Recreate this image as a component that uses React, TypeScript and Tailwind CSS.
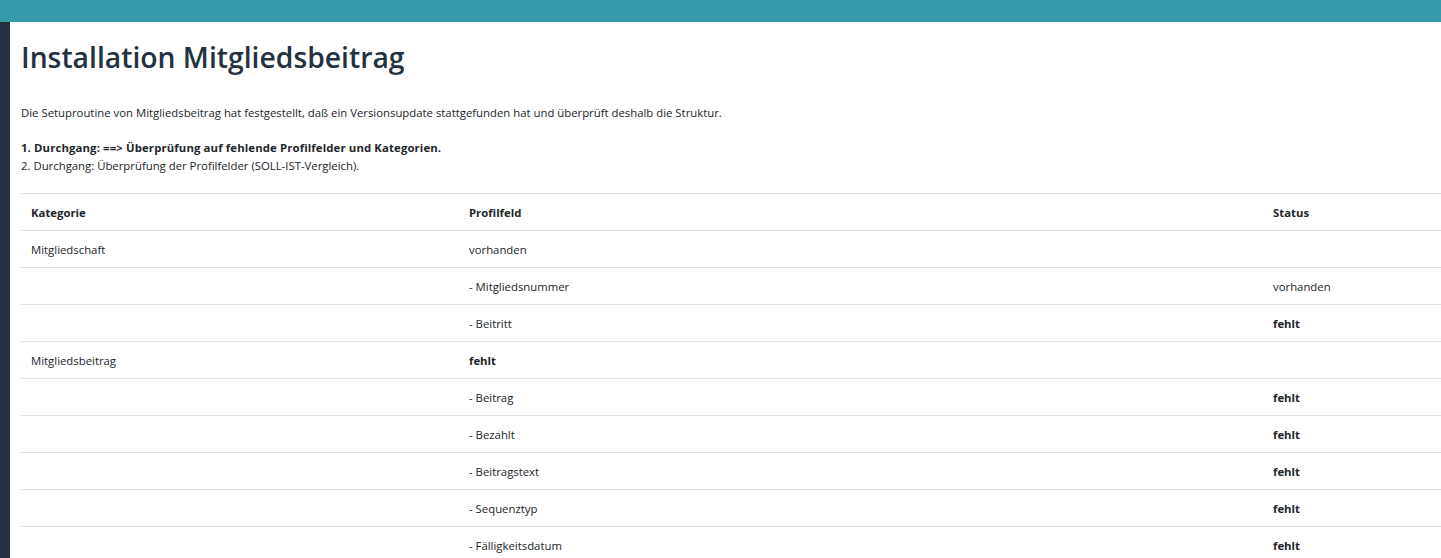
import React from "react";

const rows: { k: string; p: string; pBold?: boolean; s: string; sBold?: boolean }[] = [
  { k: "Mitgliedschaft", p: "vorhanden", s: "" },
  { k: "", p: "- Mitgliedsnummer", s: "vorhanden" },
  { k: "", p: "- Beitritt", s: "fehlt", sBold: true },
  { k: "Mitgliedsbeitrag", p: "fehlt", pBold: true, s: "" },
  { k: "", p: "- Beitrag", s: "fehlt", sBold: true },
  { k: "", p: "- Bezahlt", s: "fehlt", sBold: true },
  { k: "", p: "- Beitragstext", s: "fehlt", sBold: true },
  { k: "", p: "- Sequenztyp", s: "fehlt", sBold: true },
  { k: "", p: "- Fälligkeitsdatum", s: "fehlt", sBold: true },
];

export default function App() {
  return (
    <div
      className="w-[1441px] h-[558px] overflow-hidden bg-white flex flex-col text-[#212529]"
      style={{ fontFamily: "'Open Sans', 'Noto Sans', sans-serif" }}
    >
      <div className="h-[22px] bg-[#359aa9] shrink-0" />
      <div className="flex flex-1">
        <div className="w-[10px] bg-[#243240] shrink-0" />
        <div className="flex-1 pl-[11px]">
          <h1 className="text-[28.3px] leading-[36px] font-semibold text-[#243240] mt-[17px] mb-[0px]">
            Installation Mitgliedsbeitrag
          </h1>
          <p className="text-[11.35px] leading-[18px] mt-[29px]">
            Die Setuproutine von Mitgliedsbeitrag hat festgestellt, daß ein Versionsupdate stattgefunden hat und überprüft deshalb die Struktur.
          </p>
          <p className="text-[11.35px] leading-[18px] mt-[17px]">
            <span className="font-bold tracking-[0.13px]">1. Durchgang: ==&gt; Überprüfung auf fehlende Profilfelder und Kategorien.</span>
            <br />
            2. Durchgang: Überprüfung der Profilfelder (SOLL-IST-Vergleich).
          </p>
          <table className="w-[1420px] mt-[18px] text-[11.35px] border-collapse table-fixed">
            <colgroup>
              <col className="w-[438px]" />
              <col className="w-[804px]" />
              <col />
            </colgroup>
            <thead>
              <tr className="border-t border-[#dee2e6] border-b border-b-[#dee2e6] h-[37px]">
                <th className="text-left font-bold px-[10px] pt-[1px]">Kategorie</th>
                <th className="text-left font-bold px-[10px] pt-[1px]">Profilfeld</th>
                <th className="text-left font-bold px-[10px] pt-[1px]">Status</th>
              </tr>
            </thead>
            <tbody>
              {rows.map((r, i) => (
                <tr key={i} className="border-b border-[#dee2e6] h-[37px]">
                  <td className="px-[10px] pt-[1px]">{r.k}</td>
                  <td className={"px-[10px] pt-[1px] " + (r.pBold ? "font-bold" : "")}>{r.p}</td>
                  <td className={"px-[10px] pt-[1px] " + (r.sBold ? "font-bold" : "")}>{r.s}</td>
                </tr>
              ))}
            </tbody>
          </table>
        </div>
      </div>
    </div>
  );
}
